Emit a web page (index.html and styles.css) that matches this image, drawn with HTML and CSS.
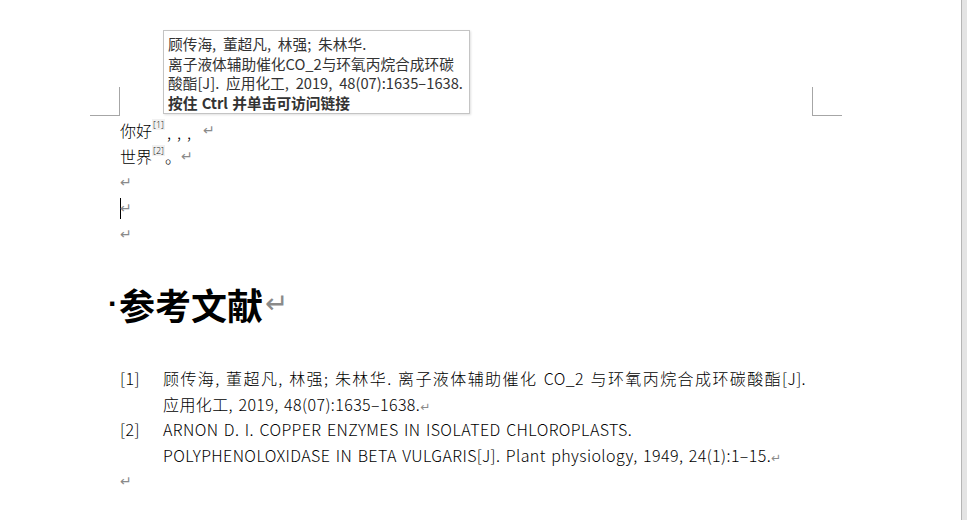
FILE: index.html
```html
<!DOCTYPE html>
<html>
  <head>
    <title>参考文献</title>
    <meta charset="utf-8">
    <link rel="stylesheet" href="styles.css">
  </head>
  <body>
  <div id="window">
    <div id="canvas">
      <div id="page">
        <div class="marks">
          <div class="mark mark-left"></div>
          <div class="mark mark-right"></div>
        </div>

        <div class="para"><span class="zh">你好</span><span class="cite">[1]</span><span class="commas">,,,</span><span class="pilcrow gap">↵</span></div>
        <div class="para"><span class="zh">世界</span><span class="cite">[2]</span><span class="zh">。</span><span class="pilcrow">↵</span></div>
        <div class="para"><span class="pilcrow">↵</span></div>
        <div class="para"><span class="caret"></span><span class="pilcrow">↵</span></div>
        <div class="para"><span class="pilcrow">↵</span></div>

        <h1 class="heading"><span class="keep-dot">·</span>参考文献<span class="pilcrow big">↵</span></h1>

        <div class="refs">
          <div class="ref-num">[1]</div>
          <div class="ref-text"><span class="full-line">顾传海, 董超凡, 林强; 朱林华. 离子液体辅助催化 CO_2 与环氧丙烷合成环碳酸酯[J].</span><br>应用化工, 2019, 48(07):1635–1638.<span class="pilcrow small">↵</span></div>
          <div class="ref-num">[2]</div>
          <div class="ref-text">ARNON D. I. COPPER ENZYMES IN ISOLATED CHLOROPLASTS.<br>POLYPHENOLOXIDASE IN BETA VULGARIS[J]. Plant physiology, 1949, 24(1):1–15.<span class="pilcrow small">↵</span></div>
        </div>
        <div class="para last"><span class="pilcrow">↵</span></div>
      </div>

      <div class="tooltip">
        <div>顾传海, 董超凡, 林强; 朱林华.</div>
        <div>离子液体辅助催化CO_2与环氧丙烷合成环碳</div>
        <div>酸酯[J]. 应用化工, 2019, 48(07):1635–1638.</div>
        <div class="tip-hint">按住 Ctrl 并单击可访问链接</div>
      </div>
    </div>
    <div id="gutter"></div>
  </div>
  </body>
</html>
```

FILE: styles.css
```css
html, body{
  margin: 0;
  padding: 0;
  background: #ffffff;
}

#window{
  display: flex;
  width: 967px;
  height: 520px;
  overflow: hidden;
}

#canvas{
  flex: 1;
  position: relative;
  font-family: "Noto Sans CJK SC", "Noto Sans", sans-serif;
  color: #000;
}

#gutter{
  width: 5px;
  border-left: 1px solid #b5b5b5;
  background: #e4e4e4;
}

#page{
  padding-top: 87px;
  padding-left: 120px;
}

.marks{
  display: flex;
  justify-content: space-between;
  width: 752px;
  margin-left: -30px;
  height: 28px;
  margin-bottom: 2px;
}

.mark{
  width: 29px;
  height: 28px;
  border-bottom: 1px solid #a6a6a6;
}

.mark-left{
  border-right: 1px solid #a6a6a6;
}

.mark-right{
  border-left: 1px solid #a6a6a6;
}

.para{
  height: 26px;
  line-height: 26px;
  font-size: 16px;
  font-weight: 300;
  white-space: nowrap;
  display: flex;
  align-items: center;
}

.para.last{
  height: 25px;
}

.cite{
  font-family: "Open Sans", sans-serif;
  font-size: 9px;
  line-height: 11px;
  align-self: flex-start;
  margin-top: 2px;
  padding: 0 1px;
  background: #f1f1f1;
  color: #111;
}

.commas{
  letter-spacing: 6px;
  padding-left: 2px;
  margin-top: 4px;
}

.pilcrow{
  font-family: "DejaVu Sans", sans-serif;
  font-size: 14px;
  line-height: 1;
  color: #8a8a8a;
  font-weight: normal;
  letter-spacing: 0;
}

.pilcrow.gap{
  margin-left: 6px;
}

.caret{
  width: 1px;
  height: 21px;
  background: #000;
  margin-right: -1px;
}

.heading{
  margin: 0;
  padding-top: 27px;
  height: 60px;
  line-height: 50px;
  font-size: 36px;
  font-weight: bold;
  display: flex;
  align-items: center;
}

.keep-dot{
  font-family: "Liberation Sans", sans-serif;
  font-size: 30px;
  margin-left: -12px;
  margin-right: 1px;
}

.pilcrow.big{
  font-size: 28px;
  margin-left: 2px;
}

.pilcrow.small{
  font-size: 12px;
}

.refs{
  display: grid;
  grid-template-columns: 43px 1fr;
  padding-top: 32px;
  font-size: 16px;
  line-height: 25.5px;
  font-weight: 300;
  letter-spacing: 0.4px;
  word-spacing: 1.5px;
  color: #000;
  white-space: nowrap;
}

.full-line{
  display: inline-block;
  width: 643px;
  text-align: justify;
  text-align-last: justify;
  text-justify: inter-character;
}

.tooltip{
  position: absolute;
  left: 163px;
  top: 30px;
  width: 298px;
  height: 77px;
  padding: 3px 3px 2px 4px;
  border: 1px solid #c4c4c4;
  background: #fff;
  box-shadow: 1px 1px 2px rgba(0, 0, 0, 0.12);
  font-size: 14.7px;
  line-height: 19.5px;
  word-spacing: 3.5px;
  color: #333;
  white-space: nowrap;
}

.tip-hint{
  font-weight: bold;
  word-spacing: 1px;
}
```
